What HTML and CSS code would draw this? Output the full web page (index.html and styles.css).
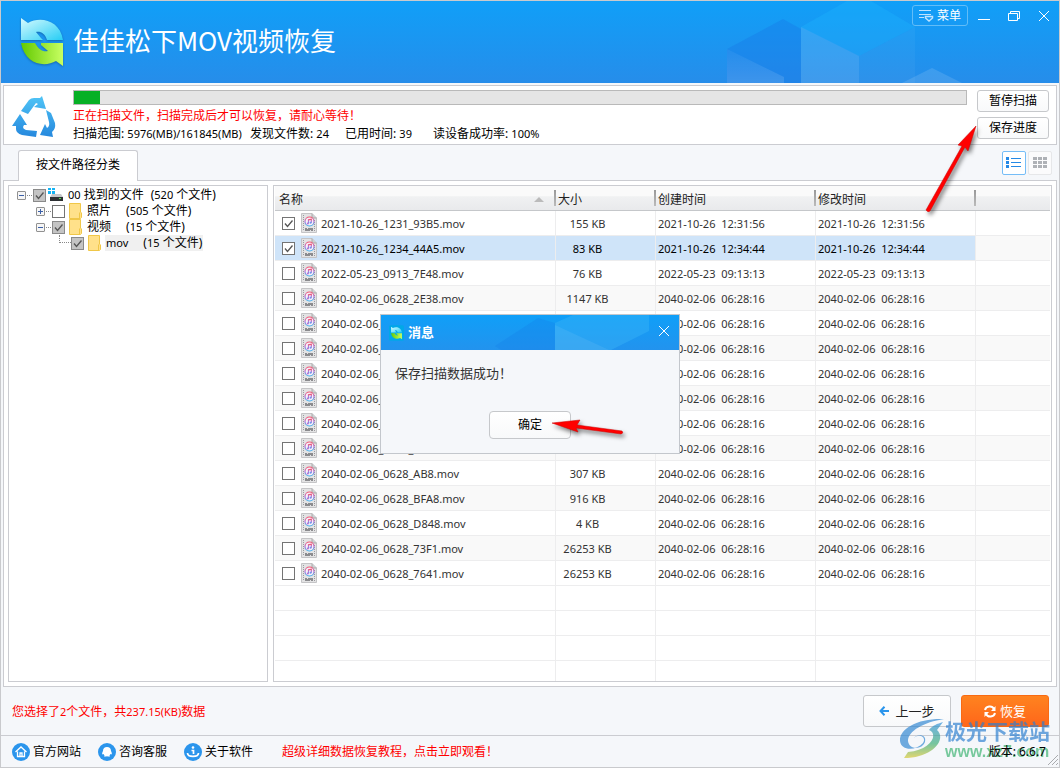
FILE: index.html
```html
<!DOCTYPE html>
<html lang="zh-CN">
<head>
<meta charset="utf-8">
<title>佳佳松下MOV视频恢复</title>
<link rel="stylesheet" href="styles.css">
</head>
<body>
<svg class="defs" aria-hidden="true">
  <defs>
    <linearGradient id="logoTop" x1="0" y1="0" x2="1" y2="1"><stop offset="0" stop-color="#d8fbff"/><stop offset="1" stop-color="#25cdf5"/></linearGradient>
    <linearGradient id="logoBottom" x1="0" y1="0" x2="1" y2="0"><stop offset="0" stop-color="#62c900"/><stop offset="1" stop-color="#c8ff62"/></linearGradient>
    <linearGradient id="blueFade" gradientUnits="userSpaceOnUse" x1="0" y1="0" x2="0" y2="42"><stop offset="0" stop-color="#4fc4f6"/><stop offset="1" stop-color="#2587dd"/></linearGradient>
    <linearGradient id="discFade" x1="0" y1="0" x2="0" y2="1"><stop offset="0" stop-color="#f4566e"/><stop offset=".5" stop-color="#b474d8"/><stop offset="1" stop-color="#35b4f0"/></linearGradient>
    <linearGradient id="cubeFade" x1="0" y1="0" x2="0" y2="1"><stop offset="0" stop-color="#fff" stop-opacity=".04"/><stop offset="1" stop-color="#fff" stop-opacity=".13"/></linearGradient>
    <linearGradient id="markFade" x1="0" y1="0" x2="0" y2="1"><stop offset="0" stop-color="#2f8fe0"/><stop offset=".6" stop-color="#3cae74"/><stop offset="1" stop-color="#d8c832"/></linearGradient>
    <symbol id="logo" viewBox="0 0 44 48">
      <path d="M1 0 L8 5 C20 -2 40 2 43 22 H27 C25 15 20 13 16 14 L21 20 L23 22 H1 Z" fill="url(#logoTop)"/>
      <path d="M1 25 H15 C19 32 23 34 28 33 L21 27 V25 H43 V48 L36 43 C24 50 5 46 1 25 Z" fill="url(#logoBottom)"/>
    </symbol>
    <symbol id="movFile" viewBox="0 0 16 20">
      <path d="M.5 .5 H11 L15.500 5 V19.500 H.5 Z" fill="#e3e3e4" stroke="#c4c4c6"/>
      <path d="M11 .5 V5 H15.500" fill="#cfcfd1" stroke="#aaa"/>
      <path d="M2.500 2 V18 M13.500 7 V18" stroke="#9a9a9d" stroke-dasharray="1 1"/>
      <circle cx="8.500" cy="8.500" r="4.500" fill="#f6f0f8" stroke="url(#discFade)" stroke-width="1.200"/>
      <path d="M7.500 10.500 V6.800 L10.300 6.200 V9.700" fill="none" stroke="url(#discFade)" stroke-width="1.200"/><circle cx="6.800" cy="10.600" r="1" fill="#c06ad0"/><circle cx="9.600" cy="9.800" r="1" fill="#7c8fe8"/>
      <rect x="4" y="15" width="8" height="3" fill="#8b8b8e"/><path d="M6.500 15 v1 M9.500 17 v1" stroke="#e3e3e4"/>
    </symbol>
    <symbol id="folder" viewBox="0 0 13 16"><path d="M.5 .5 H11.500 V9 L12.500 10 V14.500 L11.500 15.500 H.5 Z" fill="#ffe18a" stroke="#f0c748"/><path d="M10.500 9.500 V15" stroke="#f0c748"/></symbol>
  </defs>
</svg>

<div class="window">
  <header class="titlebar">
    <svg class="cubes" viewBox="0 0 360 82" aria-hidden="true">
      <path d="M28 48 L84 18 L102 28 V82 H28 Z" fill="#1671e4" opacity=".3"/>
      <path d="M28 48 L85 76 V82 H28 Z" fill="url(#cubeFade)"/>
      <path d="M102 26 L148 0 H172 L216 26 L160 55 Z" fill="#22baff" opacity=".28"/>
      <path d="M102 26 L160 55 V82 H102 Z" fill="#fff" opacity=".12"/>
      <path d="M160 55 L216 26 V82 H160 Z" fill="#fff" opacity=".04"/>
      <path d="M203 82 L233 67 L263 82 Z" fill="#fff" opacity=".12"/>
    </svg>
    <svg class="logo"><use href="#logo"/></svg>
    <h1>佳佳松下MOV视频恢复</h1>
    <div class="window-tools">
      <button class="menu" type="button"><svg width="15" height="13" viewBox="0 0 15 13" fill="none" stroke="#bfe3ff"><path d="M0 1.500 H12 M0 5.500 H12 M0 8.500 H5"/><path d="M6.500 7.500 H13.500 V9 L10 12 L6.500 9 Z" stroke-width="1.500"/></svg>菜单</button>
      <button class="tool" type="button" aria-label="最小化"><svg viewBox="0 0 12 12"><path d="M0 9.500 H12"/></svg></button>
      <button class="tool" type="button" aria-label="还原"><svg viewBox="0 0 12 12"><path d="M.5 3.500 H9.500 V10.500 H.5 Z M2.500 3.500 V1.500 H11.500 V8.500 H9.500"/></svg></button>
      <button class="tool" type="button" aria-label="关闭"><svg viewBox="0 0 12 12"><path d="M1 1 L11 11 M11 1 L1 11"/></svg></button>
    </div>
  </header>

  <section class="scan">
    <svg class="recycle" viewBox="0 0 44 42" fill="url(#blueFade)" aria-hidden="true">
      <path d="M9 15 L17 4 Q19 2 22 2 H28 L30 0 L34 13 L22 11 L26 8 L24 7 L16 18 Z"/>
      <path d="M0 30 L8 18 L15 29 L12 29 L11 31 Q11 33 14 34 L25 35 L24 41 L10 39 Q4 37 4 33 V30 Z"/>
      <path d="M34 14 L39 17 L43 27 Q44 33 40 36 L41 41 L28 39 L33 28 L35 32 Q38 30 37 26 Z"/>
    </svg>
    <div class="scan-info">
      <div class="progress" role="progressbar" aria-label="扫描进度" aria-valuenow="3"><div class="progress-fill" style="width:2.9%"></div></div>
      <p class="alert">正在扫描文件，扫描完成后才可以恢复，请耐心等待！</p>
      <p class="stats"><span>扫描范围: <span class="num">5976(MB)/161845(MB)</span></span><span>发现文件数: <span class="num">24</span></span><span>已用时间: <span class="num">39</span></span><span>读设备成功率: <span class="num">100%</span></span></p>
    </div>
    <div class="scan-actions">
      <button class="btn" type="button">暂停扫描</button>
      <button class="btn" type="button">保存进度</button>
    </div>
  </section>

  <nav class="tabs">
    <button class="tab" type="button">按文件路径分类</button>
    <div class="views">
      <button class="view active" type="button" aria-label="列表"><svg viewBox="0 0 16 12"><path d="M0 0h3v3H0z M0 4h3v3H0z M0 8h3v3H0z M5 1h10v1H5z M5 5h10v1H5z M5 9h10v1H5z" fill="#2489e6"/></svg></button>
      <button class="view" type="button" aria-label="缩略图"><svg viewBox="0 0 16 12"><path d="M1 0h4v3H1z M6 0h4v3H6z M11 0h4v3h-4z M1 4h4v3H1z M6 4h4v3H6z M11 4h4v3h-4z M1 8h4v3H1z M6 8h4v3H6z M11 8h4v3h-4z" fill="#aeb1b6"/></svg></button>
    </div>
  </nav>

  <main class="workspace">
    <ul class="tree">
      <li>
        <div class="node"><button class="twist" type="button" aria-label="折叠"></button><i class="link"></i><input class="check gray" type="checkbox" id="n0" checked>
          <svg class="drive" viewBox="0 0 16 16"><path d="M0 1h3v2H0z M4 1h3v2H4z M0 4h3v3H0z M4 4h3v3H4z" fill="#14b4f5"/><path d="M4 7 H13 L15 10 H2 Z" fill="#c4c7ca"/><path d="M2 10h13v4H2z" fill="#2d3033"/><path d="M11 11h2v1h-2z" fill="#4fe04a"/></svg>
          <label for="n0"><span><span class="num">00</span> 找到的文件</span><span class="near">(<span class="num">520</span> 个文件)</span></label></div>
        <ul>
          <li><div class="node"><button class="twist plus" type="button" aria-label="展开"></button><i class="link"></i><input class="check" type="checkbox" id="n1"><svg class="folder"><use href="#folder"/></svg><label for="n1"><span>照片</span><span>(<span class="num">505</span> 个文件)</span></label></div></li>
          <li><div class="node"><button class="twist" type="button" aria-label="折叠"></button><i class="link"></i><input class="check gray" type="checkbox" id="n2" checked><svg class="folder"><use href="#folder"/></svg><label for="n2"><span>视频</span><span>(<span class="num">15</span> 个文件)</span></label></div>
            <ul>
              <li><div class="node leaf"><i class="elbow"></i><input class="check gray" type="checkbox" id="n3" checked><svg class="folder"><use href="#folder"/></svg><label class="current" for="n3"><span class="num">mov</span><span>(<span class="num">15</span> 个文件)</span></label></div></li>
            </ul>
          </li>
        </ul>
      </li>
    </ul>

    <div class="list">
      <table class="files">
        <colgroup><col class="c-name"><col class="c-size"><col class="c-time"><col class="c-time"><col></colgroup>
        <thead><tr><th class="sorted">名称</th><th>大小</th><th>创建时间</th><th>修改时间</th><th></th></tr></thead>
        <tbody>
          <tr><td><label class="file"><input class="check" type="checkbox" checked><svg><use href="#movFile"/></svg><span>2021-10-26_1231_93B5.mov</span></label></td><td>155 KB</td><td>2021-10-26  12:31:56</td><td>2021-10-26  12:31:56</td><td></td></tr>
          <tr class="selected"><td><label class="file"><input class="check" type="checkbox" checked><svg><use href="#movFile"/></svg><span>2021-10-26_1234_44A5.mov</span></label></td><td>83 KB</td><td>2021-10-26  12:34:44</td><td>2021-10-26  12:34:44</td><td></td></tr>
          <tr><td><label class="file"><input class="check" type="checkbox"><svg><use href="#movFile"/></svg><span>2022-05-23_0913_7E48.mov</span></label></td><td>76 KB</td><td>2022-05-23  09:13:13</td><td>2022-05-23  09:13:13</td><td></td></tr>
          <tr><td><label class="file"><input class="check" type="checkbox"><svg><use href="#movFile"/></svg><span>2040-02-06_0628_2E38.mov</span></label></td><td>1147 KB</td><td>2040-02-06  06:28:16</td><td>2040-02-06  06:28:16</td><td></td></tr>
          <tr><td><label class="file"><input class="check" type="checkbox"><svg><use href="#movFile"/></svg><span>2040-02-06_0628_</span></label></td><td></td><td>2040-02-06  06:28:16</td><td>2040-02-06  06:28:16</td><td></td></tr>
          <tr><td><label class="file"><input class="check" type="checkbox"><svg><use href="#movFile"/></svg><span>2040-02-06_0628_</span></label></td><td></td><td>2040-02-06  06:28:16</td><td>2040-02-06  06:28:16</td><td></td></tr>
          <tr><td><label class="file"><input class="check" type="checkbox"><svg><use href="#movFile"/></svg><span>2040-02-06_0628_</span></label></td><td></td><td>2040-02-06  06:28:16</td><td>2040-02-06  06:28:16</td><td></td></tr>
          <tr><td><label class="file"><input class="check" type="checkbox"><svg><use href="#movFile"/></svg><span>2040-02-06_0628_</span></label></td><td></td><td>2040-02-06  06:28:16</td><td>2040-02-06  06:28:16</td><td></td></tr>
          <tr><td><label class="file"><input class="check" type="checkbox"><svg><use href="#movFile"/></svg><span>2040-02-06_0628_</span></label></td><td></td><td>2040-02-06  06:28:16</td><td>2040-02-06  06:28:16</td><td></td></tr>
          <tr><td><label class="file"><input class="check" type="checkbox"><svg><use href="#movFile"/></svg><span>2040-02-06_0628_</span></label></td><td></td><td>2040-02-06  06:28:16</td><td>2040-02-06  06:28:16</td><td></td></tr>
          <tr><td><label class="file"><input class="check" type="checkbox"><svg><use href="#movFile"/></svg><span>2040-02-06_0628_AB8.mov</span></label></td><td>307 KB</td><td>2040-02-06  06:28:16</td><td>2040-02-06  06:28:16</td><td></td></tr>
          <tr><td><label class="file"><input class="check" type="checkbox"><svg><use href="#movFile"/></svg><span>2040-02-06_0628_BFA8.mov</span></label></td><td>916 KB</td><td>2040-02-06  06:28:16</td><td>2040-02-06  06:28:16</td><td></td></tr>
          <tr><td><label class="file"><input class="check" type="checkbox"><svg><use href="#movFile"/></svg><span>2040-02-06_0628_D848.mov</span></label></td><td>4 KB</td><td>2040-02-06  06:28:16</td><td>2040-02-06  06:28:16</td><td></td></tr>
          <tr><td><label class="file"><input class="check" type="checkbox"><svg><use href="#movFile"/></svg><span>2040-02-06_0628_73F1.mov</span></label></td><td>26253 KB</td><td>2040-02-06  06:28:16</td><td>2040-02-06  06:28:16</td><td></td></tr>
          <tr><td><label class="file"><input class="check" type="checkbox"><svg><use href="#movFile"/></svg><span>2040-02-06_0628_7641.mov</span></label></td><td>26253 KB</td><td>2040-02-06  06:28:16</td><td>2040-02-06  06:28:16</td><td></td></tr>
          <tr class="empty"><td></td><td></td><td></td><td></td><td></td></tr>
          <tr class="empty"><td></td><td></td><td></td><td></td><td></td></tr>
          <tr class="empty"><td></td><td></td><td></td><td></td><td></td></tr>
          <tr class="empty last"><td></td><td></td><td></td><td></td><td></td></tr>
        </tbody>
      </table>
    </div>
  </main>

  <section class="actions">
    <p class="alert">您选择了<span class="num">2</span>个文件，共<span class="num">237.15(KB)</span>数据</p>
    <button class="btn big" type="button"><svg width="10" height="10" viewBox="0 0 10 10" fill="none" stroke="#2b95ec" stroke-width="2"><path d="M10 5 H1.500 M5.500 .7 L1.500 5 L5.500 9.300"/></svg>上一步</button>
    <button class="btn big primary" type="button"><svg width="12" height="13" viewBox="0 0 12 13" fill="none" stroke="#fff" stroke-width="2"><path d="M1 5 C2 1 8 0 10 4 M11 8 C10 12 4 13 2 9"/><path d="M11.500 1 V6 H7 Z M.5 12 V7 H5 Z" fill="#fff" stroke="none"/></svg>恢复</button>
  </section>

  <footer class="statusbar">
    <a href="#site"><svg viewBox="0 0 18 18"><circle cx="9" cy="9" r="9" fill="#2b95ec"/><path d="M3.500 9 L9 4 L14.500 9 M5.500 8.500 V13.500 H12.500 V8.500 M8 13 V10 H10 V13" fill="none" stroke="#fff" stroke-width="1.300"/></svg>官方网站</a>
    <a href="#service"><svg viewBox="0 0 18 18"><circle cx="9" cy="9" r="9" fill="#2b95ec"/><path d="M9 4 C11.500 4 13 5.500 13 8 C14 10 14 11 13.500 11.500 L12.500 11 L11.500 12.500 L12 13.500 H9.500 L9 13 L8.500 13.500 H6 L6.500 12.500 L5.500 11 L4.500 11.500 C4 11 4 10 5 8 C5 5.500 6.500 4 9 4 Z" fill="#fff"/></svg>咨询客服</a>
    <a href="#about"><svg viewBox="0 0 18 18"><circle cx="9" cy="9" r="9" fill="#2b95ec"/><circle cx="9" cy="4.500" r="1.300" fill="#fff"/><path d="M7.500 7.500 H9.500 V11 M3.500 10 C3.500 14.500 14.500 14.500 14.500 10" fill="none" stroke="#fff" stroke-width="1.700"/></svg>关于软件</a>
    <a class="promo" href="#guide">超级详细数据恢复教程，点击立即观看！</a>
    <span class="version">版本: 6.6.7</span>
    <svg class="grip" viewBox="0 0 11 11" stroke="#a9abae"><path d="M1 11 L11 1 M5 11 L11 5 M9 11 L11 9"/></svg>
  </footer>

  <div class="watermark" aria-hidden="true">
    <svg viewBox="0 0 46 42"><path d="M45 1 C20 0 0 10 1 23 C2 33 17 33 24 25 C28 19 20 15 15 20 C18 16 28 16 26 24 C23 32 10 32 9 23 C9 13 25 4 45 1 Z" fill="#2f86d2"/><path d="M30 12 C40 16 32 32 9 34 L5 40 C34 40 48 21 38 12 L44 4 C38 6 34 7 30 12 Z" fill="url(#markFade)"/></svg>
    <div><b>极光下载站</b><span>www.xz7.com</span></div>
  </div>

  <div class="dialog" role="dialog" aria-labelledby="dlgTitle">
    <div class="dialog-head">
      <svg class="dialog-cubes" viewBox="0 0 298 35" aria-hidden="true"><path d="M114 31 L157 3 L174 8 V35 H120 Z" fill="#157ee8" opacity=".3"/><path d="M174 8 L192 0 H268 V16 L230 35 H174 Z" fill="#3bb6f7" opacity=".4"/><path d="M174 10 L228 35 H174 Z" fill="#fff" opacity=".07"/></svg>
      <svg class="dialog-logo" viewBox="-7 -6 58 60"><rect x="-7" y="-6" width="58" height="60" rx="6" fill="#00a8e8"/><use href="#logo" width="44" height="48"/></svg>
      <h2 id="dlgTitle">消息</h2>
      <button class="tool" type="button" aria-label="关闭消息"><svg viewBox="0 0 12 12"><path d="M1 1 L11 11 M11 1 L1 11"/></svg></button>
    </div>
    <p>保存扫描数据成功！</p>
    <button class="btn ok" type="button">确定</button>
    <svg class="arrow arrow-ok" viewBox="0 0 76 20" aria-hidden="true"><path d="M0 5 L28 2 L25 7 L70 13 Q72 15 69 16 L24 10 L26 14 Z" fill="#f00" stroke="#c80000" stroke-width=".5"/></svg>
  </div>

  <svg class="arrow arrow-save" viewBox="0 0 56 92" aria-hidden="true"><path d="M51 1 L43 26 L40 22 L5 86 Q3 88 1 85 L37 21 L33 20 Z" fill="#f00" stroke="#c80000" stroke-width=".5"/></svg>
</div>
</body>
</html>
```

FILE: styles.css
```css
* { box-sizing: border-box; }

body {
  margin: 0;
  color: #000;
  font: 12px/16px "Noto Sans", "Noto Sans CJK SC", sans-serif;
}

h1, h2, p, ul { margin: 0; padding: 0; font-weight: 400; }
ul { list-style: none; }
button { font: inherit; padding: 0; cursor: pointer; }
a { color: inherit; text-decoration: none; }
svg { display: block; flex: none; }
.defs { position: absolute; width: 0; height: 0; }
.num { font-size: 11px; }

.window {
  position: relative;
  display: flex;
  flex-direction: column;
  min-height: 100vh;
  border: 1px solid #c9cacd;
  background: #f5f7fa;
}

/* Title bar */
.titlebar {
  position: relative;
  display: flex;
  align-items: center;
  height: 82px;
  padding-left: 19px;
  background: linear-gradient(#109ff8, #268dea);
  color: #fff;
}
.cubes { position: absolute; right: 0; top: 0; width: 360px; height: 82px; }
.logo { width: 44px; height: 48px; filter: drop-shadow(0 1px 1px #1668ae); }
.titlebar h1 {
  margin: 0 0 4px 9px;
  font: 400 26px/36px "Noto Sans CJK SC", sans-serif;
}
.window-tools {
  position: relative;
  display: flex;
  align-items: center;
  align-self: flex-start;
  gap: 18px;
  margin: 4px 9px 0 auto;
}
.menu {
  display: flex;
  align-items: center;
  justify-content: center;
  gap: 3px;
  width: 56px;
  height: 21px;
  margin-right: -8px;
  border: 1px solid #62bdf8;
  border-radius: 3px;
  background: none;
  color: #fff;
}
.tool { border: 0; background: none; }
.tool svg { width: 12px; height: 12px; fill: none; stroke: #fff; }

/* Shared controls */
.btn {
  display: flex;
  align-items: center;
  justify-content: center;
  width: 72px;
  height: 22px;
  border: 1px solid #c6c8cb;
  border-radius: 3px;
  background: linear-gradient(#fff, #f8f9fa);
  color: #000;
}
.alert { color: #f00; }
.check {
  flex: none;
  appearance: none;
  width: 13px;
  height: 13px;
  margin: 0;
  border: 1px solid #747474;
  background: #fff center / 11px 11px no-repeat;
}
.check:checked { background-image: url("data:image/svg+xml,%3Csvg xmlns='http://www.w3.org/2000/svg' viewBox='0 0 11 11'%3E%3Cpath d='M2 5.500L4.500 8.500L9.500 2.500' fill='none' stroke='%23555' stroke-width='1.300'/%3E%3C/svg%3E"); }
.check.gray { background-color: #c4c4c4; border-color: #8a8a8a; }

/* Scan panel */
.scan {
  display: flex;
  margin: 2px 2px 0;
  padding: 4px 7px 2px 8px;
  border: 1px solid #cbccd1;
  background: #fff;
}
.recycle { width: 44px; height: 42px; margin-top: 6px; }
.scan-info { flex: 1; margin-left: 17px; }
.progress { height: 15px; border: 1px solid #b9b9b9; background: #e5e5e5; }
.progress-fill { height: 100%; background: #06b025; }
.scan-info .alert { margin-top: 3px; }
.stats { display: grid; grid-template-columns: 177px 95px 88px auto; justify-content: start; margin-top: 2px; white-space: nowrap; }
.scan-actions { display: flex; flex-direction: column; gap: 5px; margin-left: 10px; }

/* Tabs */
.tabs {
  display: flex;
  justify-content: space-between;
  align-items: flex-start;
  padding: 5px 7px 0 17px;
}
.tab {
  position: relative;
  width: 120px;
  height: 31px;
  margin-bottom: -1px;
  padding-bottom: 2px;
  border: 1px solid #cbccd1;
  border-bottom: 0;
  border-radius: 3px 3px 0 0;
  background: #fff;
  color: #000;
}
.views { display: flex; gap: 2px; padding-top: 1px; }
.view {
  display: grid;
  place-items: center;
  width: 24px;
  height: 24px;
  border: 1px solid #e6e7e9;
  border-radius: 2px;
  background: #fbfbfc;
}
.view.active { border-color: #75bdf7; background: #fff; }
.view svg { width: 16px; height: 12px; }

/* Workspace */
.workspace {
  flex: 1;
  display: grid;
  grid-template-columns: 260px 1fr;
  gap: 5px;
  margin: 0 2px;
  padding: 4px;
  border: 1px solid #cbccd1;
  background: #fff;
}
.tree, .list { border: 1px solid #cbccd1; background: #fff; }
.tree { padding: 1px 8px; }
.tree ul { padding-left: 19px; }
.node { display: flex; align-items: center; height: 16px; }
.twist {
  width: 9px;
  height: 9px;
  border: 1px solid #919191;
  border-radius: 1px;
  background: linear-gradient(#3a5fa8, #3a5fa8) center / 5px 1px no-repeat #f6f6f6;
}
.twist.plus {
  background: linear-gradient(#3a5fa8, #3a5fa8) center / 5px 1px no-repeat, linear-gradient(#3a5fa8, #3a5fa8) center / 1px 5px no-repeat, #f6f6f6;
}
.link { width: 5px; margin: 0 1px; border-top: 1px dotted #888; }
.elbow { align-self: flex-start; width: 12px; height: 8px; margin-left: 4px; border: dotted #888; border-width: 0 0 1px 1px; }
.drive { width: 16px; height: 16px; margin: 0 4px 0 2px; }
.folder { width: 13px; height: 16px; margin: 0 4px; }
.node label { display: flex; gap: 15px; padding: 0 1px; white-space: nowrap; }
.node label:has(.near) { gap: 7px; padding: 0; }
.node .current { background: #f0f0f0; }

.list { padding: 0 1px; }
.files {
  width: 100%;
  border-collapse: separate;
  border-spacing: 0;
  table-layout: fixed;
  font-size: 11px;
}
.c-name { width: 281px; }
.c-size { width: 100px; }
.c-time { width: 160px; }
th {
  height: 25px;
  padding: 3px 2px 0;
  border-bottom: 1px solid #c5c7ca;
  background: linear-gradient(#999, #bbb) right center / 2px 16px no-repeat, linear-gradient(#fafafa 40%, #f0f1f2 45%, #e9eaec);
  font-size: 12px;
  font-weight: 400;
  text-align: left;
  color: #222;
}
th:first-child { padding-left: 4px; }
th:last-child { background: linear-gradient(#fafafa 40%, #f0f1f2 45%, #e9eaec); }
.sorted::after {
  content: "";
  float: right;
  margin: 5px 10px 0 0;
  border: 5px solid transparent;
  border-top: 0;
  border-bottom-color: #bbb;
}
td {
  height: 25px;
  padding: 2px 2px 0;
  border: solid #ededee;
  border-width: 0 1px 1px 0;
  color: #333;
  white-space: pre;
}
td:first-child { padding-top: 0; }
td:last-child { border-right: 0; }
td:nth-child(2) { padding-right: 38px; text-align: center; }
tbody tr:nth-child(even):not(.empty) td { background: #f9f9f9; }
tbody .selected:nth-child(even) td:not(:last-child) { background: #cfe4f9; color: #000; }
.last td { height: 20px; border-bottom: 0; }
.file { display: flex; align-items: center; padding-left: 5px; }
.file svg { width: 16px; height: 20px; margin: 0 4px 0 6px; }
.file span { padding-top: 2px; }

/* Bottom area */
.actions { display: flex; align-items: center; height: 48px; padding: 0 10px 0 11px; gap: 10px; }
.actions .alert { margin-right: auto; padding-top: 2px; }
.big { width: 88px; height: 32px; gap: 6px; font-size: 13px; color: #222; }
.primary { gap: 4px; border-color: #f96a12; background: linear-gradient(#ff831f, #ff661a); color: #fff; }
.statusbar {
  position: relative;
  display: flex;
  align-items: center;
  gap: 17px;
  height: 32px;
  padding: 0 13px 0 11px;
  border-top: 1px solid #cbccd1;
}
.statusbar a { display: flex; align-items: center; gap: 3px; }
.statusbar a svg { width: 18px; height: 18px; }
.statusbar .promo { margin-left: 12px; color: #f00; }
.version { position: relative; z-index: 2; margin-left: auto; }
.grip { position: absolute; right: 1px; bottom: 2px; width: 11px; height: 11px; }

.watermark {
  position: absolute;
  right: 9px;
  bottom: 6px;
  display: flex;
  align-items: center;
  opacity: .68;
  pointer-events: none;
}
.watermark svg { width: 46px; height: 42px; }
.watermark b { display: block; font: 700 21px/26px "Noto Sans CJK SC", sans-serif; color: #2c7fd0; }
.watermark span { display: block; font: 700 16px/18px "Liberation Sans", sans-serif; color: #3bb371; }

/* Message dialog */
.dialog {
  position: absolute;
  left: 50%;
  top: 50%;
  width: 300px;
  height: 140px;
  margin: -70px 0 0 -150px;
  border: 1px solid #c3c7cc;
  background: #f5f7fa;
}
.dialog-head {
  position: relative;
  display: flex;
  align-items: center;
  height: 35px;
  padding: 0 9px 0 8px;
  background: linear-gradient(#109ff8, #2293ee);
  color: #fff;
}
.dialog-cubes { position: absolute; inset: 0; width: 298px; height: 35px; }
.dialog-logo { position: relative; width: 15px; height: 16px; }
.dialog h2 { position: relative; margin-left: 4px; padding-bottom: 2px; font-size: 13px; font-weight: 700; }
.dialog .tool { position: relative; margin: 0 0 4px auto; }
.dialog p { padding: 15px 14px 17px; font-size: 13px; color: #333; }
.ok { width: 82px; height: 28px; margin: 13px auto 0; border-radius: 4px; }

.arrow { position: absolute; filter: drop-shadow(2px 3px 2px rgba(0, 0, 0, .5)); pointer-events: none; }
.arrow-ok { right: 51px; bottom: 15px; width: 76px; height: 20px; }
.arrow-save { right: 78px; top: 124px; width: 56px; height: 92px; }
```
